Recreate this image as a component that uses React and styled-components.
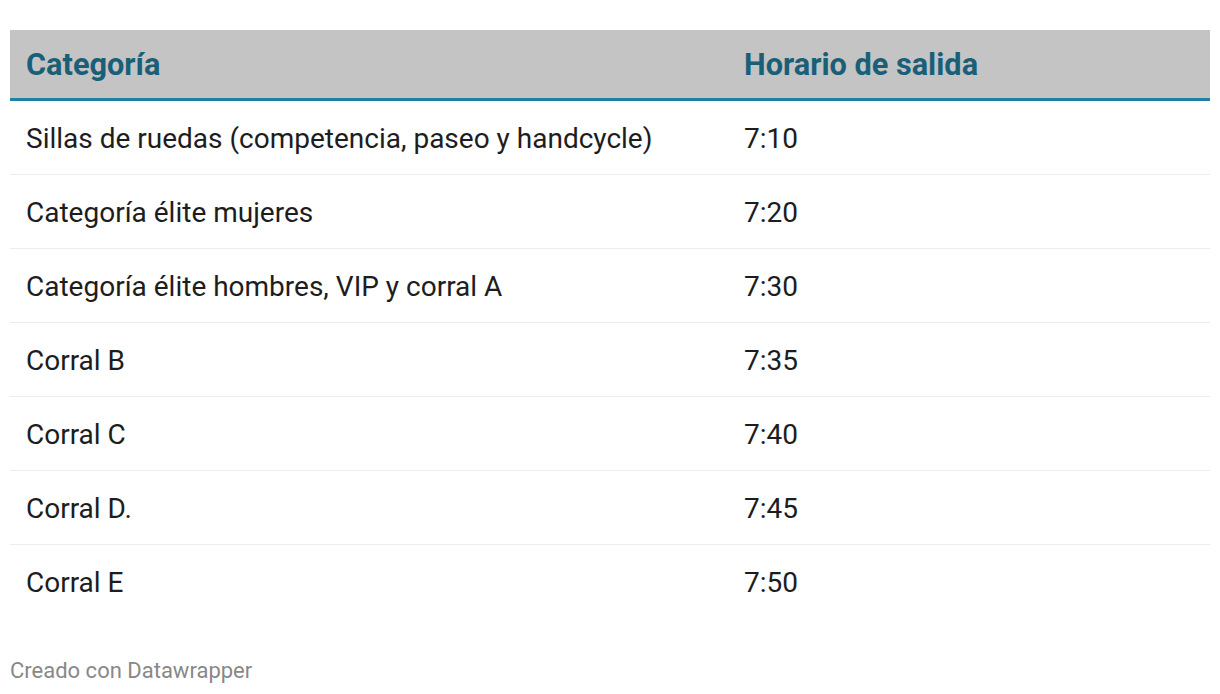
import React from 'react';
import styled, { createGlobalStyle } from 'styled-components';

const GlobalStyle = createGlobalStyle`
  body {
    margin: 0;
    background: #fff;
    font-family: Roboto, "Liberation Sans", sans-serif;
  }
`;

const Page = styled.div`
  padding: 30px 10px 0 10px;
`;

const Table = styled.table`
  width: 1200px;
  table-layout: fixed;
  border-collapse: collapse;
  font-size: 28px;
  color: #1d1d1d;
`;

const HeadCell = styled.th`
  background: #c4c4c4;
  color: #1a5f78;
  font-size: 30.7px;
  font-weight: 700;
  text-align: left;
  height: 68px;
  padding: 0 16px;
  border-bottom: 3px solid #1d81a2;
  width: ${p => p.$w || 'auto'};
`;

const Row = styled.tr`
  border-bottom: ${p => (p.$last ? 'none' : '1px solid #ececec')};
`;

const Cell = styled.td`
  height: 71px;
  padding: 2px 16px 0;
  vertical-align: middle;
`;

const Footer = styled.div`
  margin-top: 40px;
  font-size: 22px;
  color: #888;
`;

const rows = [
  ['Sillas de ruedas (competencia, paseo y handcycle)', '7:10'],
  ['Categoría élite mujeres', '7:20'],
  ['Categoría élite hombres, VIP y corral A', '7:30'],
  ['Corral B', '7:35'],
  ['Corral C', '7:40'],
  ['Corral D.', '7:45'],
  ['Corral E', '7:50'],
];

export default function App() {
  return (
    <Page>
      <GlobalStyle />
      <Table>
        <thead>
          <tr>
            <HeadCell $w="686px">Categoría</HeadCell>
            <HeadCell>Horario de salida</HeadCell>
          </tr>
        </thead>
        <tbody>
          {rows.map(([cat, time], i) => (
            <Row key={cat} $last={i === rows.length - 1}>
              <Cell>{cat}</Cell>
              <Cell>{time}</Cell>
            </Row>
          ))}
        </tbody>
      </Table>
      <Footer>Creado con Datawrapper</Footer>
    </Page>
  );
}
